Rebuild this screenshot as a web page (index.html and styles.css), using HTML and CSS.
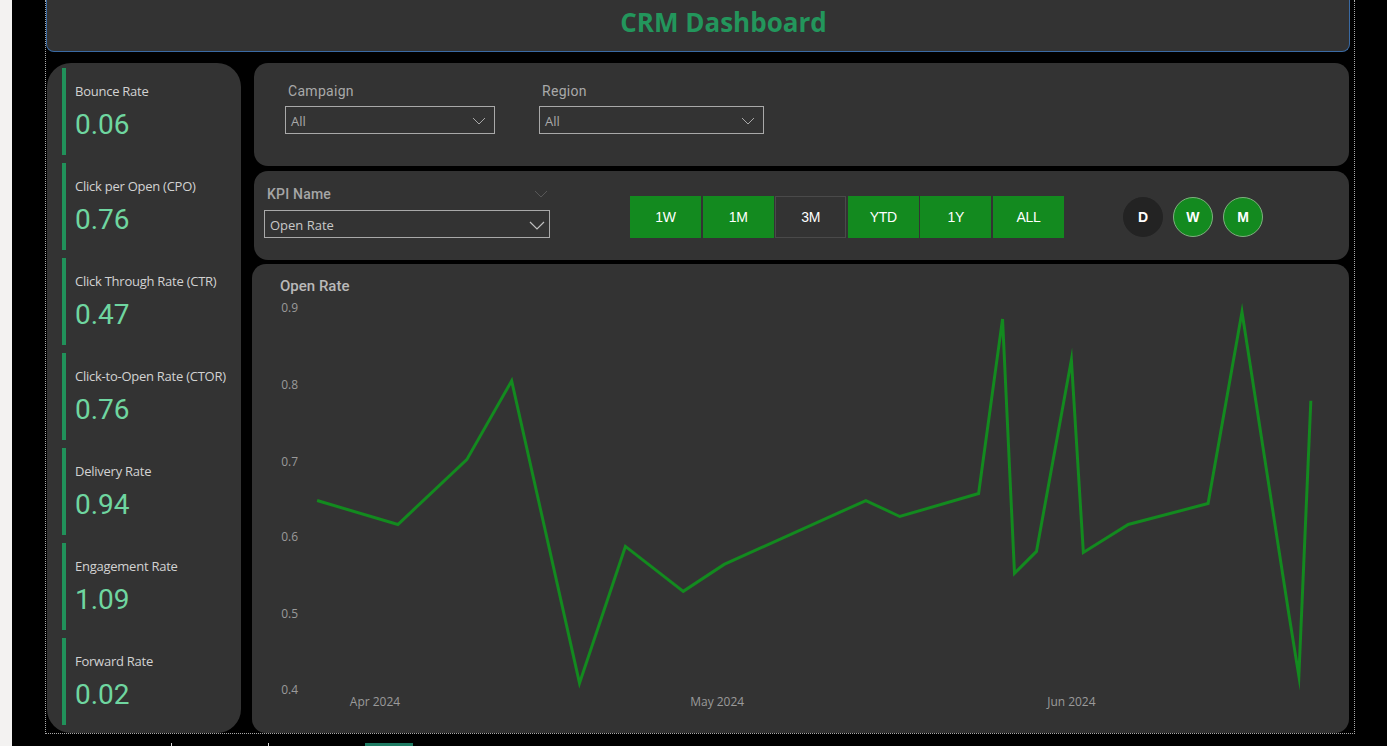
FILE: index.html
```html
<!DOCTYPE html>
<html>
<head>
<meta charset="utf-8">
<link rel="stylesheet" href="styles.css">
</head>
<body>
<div class="side"></div>
<div class="main">
  <div class="canvas">
    <header class="header"><h1 class="title">CRM Dashboard</h1></header>
    <div class="row">
      <aside class="kpis">
        <div class="card"><div class="bar"></div><div class="card-body"><div class="card-label">Bounce Rate</div><div class="card-value">0.06</div></div></div>
        <div class="card"><div class="bar"></div><div class="card-body"><div class="card-label">Click per Open (CPO)</div><div class="card-value">0.76</div></div></div>
        <div class="card"><div class="bar"></div><div class="card-body"><div class="card-label">Click Through Rate (CTR)</div><div class="card-value">0.47</div></div></div>
        <div class="card"><div class="bar"></div><div class="card-body"><div class="card-label">Click-to-Open Rate (CTOR)</div><div class="card-value">0.76</div></div></div>
        <div class="card"><div class="bar"></div><div class="card-body"><div class="card-label">Delivery Rate</div><div class="card-value">0.94</div></div></div>
        <div class="card"><div class="bar"></div><div class="card-body"><div class="card-label">Engagement Rate</div><div class="card-value">1.09</div></div></div>
        <div class="card"><div class="bar"></div><div class="card-body"><div class="card-label">Forward Rate</div><div class="card-value">0.02</div></div></div>
      </aside>
      <section class="right">
        <div class="panel filters">
          <div class="field field-campaign">
            <div class="field-label">Campaign</div>
            <div class="dropdown"><span>All</span><svg class="chev" width="14" height="8" viewBox="0 0 14 8"><polyline points="1,1 7,7 13,1" fill="none" stroke="#a8a8a8" stroke-width="1"/></svg></div>
          </div>
          <div class="field field-region">
            <div class="field-label">Region</div>
            <div class="dropdown"><span>All</span><svg class="chev" width="14" height="8" viewBox="0 0 14 8"><polyline points="1,1 7,7 13,1" fill="none" stroke="#a8a8a8" stroke-width="1"/></svg></div>
          </div>
        </div>
        <div class="panel controls">
          <div class="kpi-field">
            <div class="kpi-head"><span class="kpi-label">KPI Name</span><svg width="14" height="8" viewBox="0 0 14 8"><polyline points="1,1 7,7 13,1" fill="none" stroke="#575757" stroke-width="1"/></svg></div>
            <div class="dropdown kpi-drop"><span>Open Rate</span><svg class="chev" width="16" height="9" viewBox="0 0 16 9"><polyline points="1,1 8,8 15,1" fill="none" stroke="#c0c0c0" stroke-width="1.2"/></svg></div>
          </div>
          <div class="ranges">
            <button class="rng">1W</button>
            <button class="rng">1M</button>
            <button class="rng rng-off">3M</button>
            <button class="rng">YTD</button>
            <button class="rng">1Y</button>
            <button class="rng">ALL</button>
          </div>
          <div class="grains">
            <span class="dot dot-off">D</span>
            <span class="dot">W</span>
            <span class="dot">M</span>
          </div>
        </div>
        <div class="panel chart">
          <div class="chart-title">Open Rate</div>
          <svg class="plot" width="1097" height="438" viewBox="0 0 1097 438">
            <g class="ylab" font-size="12" fill="#9a9a9a">
              <text x="28" y="16">0.9</text>
              <text x="28" y="93">0.8</text>
              <text x="28" y="170">0.7</text>
              <text x="28" y="246">0.6</text>
              <text x="28" y="323">0.5</text>
              <text x="28" y="399">0.4</text>
            </g>
            <g class="xlab" font-size="12" fill="#9a9a9a" text-anchor="middle">
              <text x="122" y="411">Apr 2024</text>
              <text x="465" y="411">May 2024</text>
              <text x="820" y="411">Jun 2024</text>
            </g>
            <polyline fill="none" stroke="#138a1f" stroke-width="3" stroke-linejoin="miter" stroke-miterlimit="10"
              points="64,205 145,229 214,164 259,85 327,388 373,251 431,296 472,269 614,205 648,221 727,198 751,23 763,278 785,256 820,64 832,257 877,229 957,208 991,16 1038,319 1048,381 1060,105"/>
          </svg>
        </div>
      </section>
    </div>
  </div>
  <div class="tabs">
    <span class="tab-line t1"></span>
    <span class="tab-line t2"></span>
    <span class="tab-active"></span>
  </div>
</div>
</body>
</html>
```
FILE: styles.css
```css
html, body {
  margin: 0;
  padding: 0;
}
body {
  background: #000;
  width: 1387px;
  height: 746px;
  overflow: hidden;
  display: flex;
  font-family: "Open Sans", "Noto Sans", sans-serif;
}
.side {
  width: 12px;
  flex: none;
  background: #f3f2f1;
}
.main {
  flex: none;
  display: flex;
  flex-direction: column;
  padding-left: 33px;
}
.canvas {
  width: 1310px;
  height: 734px;
  box-sizing: border-box;
  border: 1px dotted #a8a8a8;
  border-top: none;
  padding-right: 4px;
  display: flex;
  flex-direction: column;
}
.header {
  height: 52px;
  box-sizing: border-box;
  background: #333333;
  border: 1px solid #3a6aa3;
  border-top: none;
  border-radius: 0 0 8px 8px;
  display: flex;
  align-items: center;
  justify-content: center;
  padding-left: 51px;
}
.title {
  margin: 0;
  font-size: 26px;
  font-weight: 700;
  line-height: 44px;
  color: #23965c;
  padding-bottom: 8px;
}
.row {
  margin-top: 11px;
  height: 670px;
  display: flex;
}
.kpis {
  margin-left: 1px;
  width: 194px;
  flex: none;
  box-sizing: border-box;
  background: #333333;
  border-radius: 24px;
  padding: 5px 0 0 15px;
  display: flex;
  flex-direction: column;
  gap: 8px;
}
.card {
  height: 87px;
  display: flex;
}
.bar {
  width: 4px;
  background: #21915a;
  flex: none;
}
.card-body {
  padding: 14px 0 0 9px;
  white-space: nowrap;
}
.card-label {
  font-size: 13px;
  line-height: 18px;
  color: #d2d2d2;
  letter-spacing: -0.25px;
}
.card-value {
  margin-top: 8px;
  font-family: "Roboto", sans-serif;
  font-size: 28px;
  line-height: 34px;
  color: #6fd6a0;
}
.right {
  margin-left: 13px;
  width: 1095px;
  flex: none;
  display: flex;
  flex-direction: column;
}
.panel {
  background: #333333;
  border-radius: 14px;
}
.filters {
  height: 103px;
  box-sizing: border-box;
  padding: 19px 0 0 31px;
  display: flex;
  gap: 44px;
}
.field-campaign { width: 210px; }
.field-region { width: 225px; }
.field-label {
  padding-left: 3px;
  font-family: "Roboto", sans-serif;
  font-size: 14px;
  line-height: 18px;
  color: #a9a9a9;
  letter-spacing: 0.3px;
}
.dropdown {
  margin-top: 6px;
  height: 28px;
  box-sizing: border-box;
  border: 1px solid #a9a9a9;
  display: flex;
  align-items: center;
  justify-content: space-between;
  padding: 2px 8px 0 5px;
  font-size: 13px;
  color: #a9a9a9;
}
.chev { display: block; }
.controls {
  margin-top: 5px;
  height: 89px;
  box-sizing: border-box;
  padding: 14px 0 0 10px;
  display: flex;
  align-items: flex-start;
}
.kpi-field {
  width: 286px;
  flex: none;
}
.kpi-head {
  height: 18px;
  display: flex;
  align-items: center;
  justify-content: space-between;
  padding: 0 2px 0 3px;
}
.kpi-label {
  font-family: "Roboto", sans-serif;
  font-weight: 500;
  font-size: 14px;
  line-height: 18px;
  color: #a6a6a6;
  letter-spacing: 0.2px;
}
.kpi-drop {
  margin-top: 7px;
  color: #c8c8c8;
  padding-right: 4px;
}
.ranges {
  margin: 11px 0 0 80px;
  display: flex;
  gap: 1.6px;
}
.rng {
  width: 71px;
  height: 42px;
  box-sizing: border-box;
  border: 1px solid #138a1f;
  background: #138a1f;
  color: #ffffff;
  font-family: "Liberation Sans Narrow", "Liberation Sans", sans-serif;
  font-size: 14px;
  letter-spacing: -0.3px;
  padding: 0;
  margin: 0;
}
.rng-off {
  background: #333333;
  border-color: #4a4a4a;
}
.grains {
  margin: 12px 0 0 59px;
  display: flex;
  gap: 10px;
}
.dot {
  width: 40px;
  height: 40px;
  box-sizing: border-box;
  border-radius: 50%;
  background: #138a1f;
  border: 1px solid #7fb07f;
  display: flex;
  align-items: center;
  justify-content: center;
  color: #fff;
  font-family: "Liberation Sans Narrow", "Liberation Sans", sans-serif;
  font-weight: 700;
  font-size: 14px;
}
.dot-off {
  background: #232323;
  border-color: #232323;
}
.chart {
  margin-top: 4px;
  margin-left: -2px;
  width: 1097px;
  height: 469px;
  box-sizing: border-box;
  padding-top: 12px;
  display: flex;
  flex-direction: column;
  overflow: hidden;
}
.chart-title {
  padding-left: 28px;
  height: 20px;
  font-family: "Roboto", sans-serif;
  font-weight: 500;
  font-size: 15px;
  line-height: 20px;
  color: #b9b9b9;
}
.plot {
  display: block;
  font-family: "Open Sans", sans-serif;
}
.tabs {
  height: 12px;
  display: flex;
  align-items: flex-end;
}
.tab-line {
  width: 1px;
  height: 3px;
  background: #d8d8d8;
}
.t1 { margin-left: 126px; }
.t2 { margin-left: 96px; }
.tab-active {
  margin-left: 96px;
  width: 48px;
  height: 3px;
  background: #1d7a62;
}
```
